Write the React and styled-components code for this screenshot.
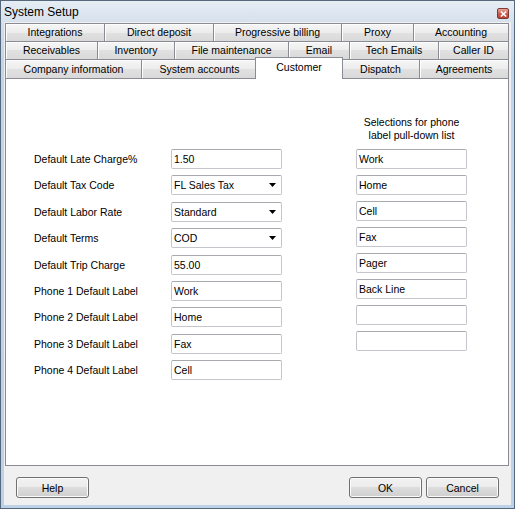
import React from "react";
import styled, { createGlobalStyle } from "styled-components";

const Global = createGlobalStyle`
  html, body { margin: 0; padding: 0; background: #c6d7ea; }
  * { box-sizing: border-box; }
  body { font-family: "Liberation Sans", Arial, sans-serif; font-size: 10.5px; color: #000; }
`;

const Window = styled.div`
  width: 515px;
  height: 509px;
  border: 1px solid #56687c;
  background: linear-gradient(#d9e4f0, #c2d5e9 60px, #bdd1e7);
  display: flex;
  flex-direction: column;
`;

const TitleBar = styled.div`
  height: 21px;
  flex: 0 0 21px;
  display: flex;
  align-items: center;
  justify-content: space-between;
  padding: 1px 5px 0 3px;
  background: linear-gradient(#e6edf5, #d6e1ec);
`;

const Title = styled.span`
  font-size: 12px;
  color: #000;
`;

const CloseButton = styled.span`
  width: 12px;
  height: 11px;
  margin-top: 3px;
  border: 1px solid #7c3a33;
  border-radius: 2px;
  background: linear-gradient(#e7a596, #cc5a4c 55%, #b8433a);
  display: flex;
  align-items: center;
  justify-content: center;
`;

const Client = styled.div`
  flex: 1;
  margin: 0 3px 3px 3px;
  background: #f0f0f0;
  padding: 1px 2px 0 1px;
  display: flex;
  flex-direction: column;
`;

const TabRow = styled.div`
  display: flex;
  height: ${(p) => p.$h}px;
  flex: 0 0 ${(p) => p.$h}px;
`;

const Tab = styled.div`
  flex: 0 0 auto;
  height: 100%;
  border: 1px solid #898c95;
  border-bottom: none;
  border-right: ${(p) => (p.$last ? "1px solid #898c95" : "none")};
  background: linear-gradient(#f6f6f6, #ececec 50%, #e1e1e1 50%, #d9d9d9);
  box-shadow: inset 1px 1px 0 #fdfdfd;
  display: flex;
  align-items: center;
  justify-content: center;
  white-space: nowrap;
  padding-bottom: 1px;
`;

const ActiveTab = styled.div`
  flex: 0 0 auto;
  position: relative;
  z-index: 1;
  margin: -2px -2px -1px -2px;
  height: calc(100% + 3px);
  border: 1px solid #898c95;
  border-bottom: none;
  background: #fff;
  display: flex;
  align-items: center;
  justify-content: center;
  padding-bottom: 3px;
  white-space: nowrap;
`;

const Panel = styled.div`
  height: 388px;
  flex: 0 0 388px;
  border: 1px solid #898c95;
  background: #fff;
  display: flex;
  align-items: flex-start;
  padding: 37px 0 0 28px;
`;

const Form = styled.div`
  margin-top: 33px;
  display: grid;
  grid-template-columns: 137px 111px;
  row-gap: 6.375px;
  align-items: center;
`;

const Label = styled.div`
  white-space: nowrap;
`;

const TextBox = styled.div`
  height: 20px;
  border: 1px solid #c4c6cb;
  border-top-color: #a7a9ae;
  border-radius: 2px;
  background: #fff;
  padding: 0 5px 0 2px;
  display: flex;
  align-items: center;
  justify-content: space-between;
  white-space: nowrap;
`;

const SideColumn = styled.div`
  margin-left: 74px;
  width: 111px;
  display: flex;
  flex-direction: column;
  gap: 6px;
`;

const SideHeading = styled.div`
  text-align: center;
  line-height: 13px;
  margin-bottom: 1px;
`;

const Footer = styled.div`
  display: flex;
  align-items: flex-start;
  padding: 11px 10px 0 11px;
  gap: 4px;
`;

const Button = styled.button`
  width: 73px;
  height: 21px;
  border: 1px solid #707070;
  border-radius: 3px;
  background: linear-gradient(#f2f2f2, #ebebeb 50%, #dddddd 50%, #cfcfcf);
  box-shadow: inset 0 0 0 1px #fbfbfb;
  font-family: "Liberation Sans", Arial, sans-serif;
  font-size: 10.5px;
  color: #000;
  padding: 0;
  margin-right: ${(p) => (p.$push ? "auto" : "0")};
`;

const Arrow = () => (
  <svg width="7" height="4" viewBox="0 0 7 4">
    <path d="M0 0 H7 L3.5 4 Z" fill="#000" />
  </svg>
);

const tabRows = [
  {
    h: 18,
    tabs: [
      ["Integrations", 99],
      ["Direct deposit", 109],
      ["Progressive billing", 128],
      ["Proxy", 72],
      ["Accounting", 96],
    ],
  },
  {
    h: 18,
    tabs: [
      ["Receivables", 92],
      ["Inventory", 77],
      ["File maintenance", 114],
      ["Email", 61],
      ["Tech Emails", 89],
      ["Caller ID", 71],
    ],
  },
  {
    h: 19,
    tabs: [
      ["Company information", 136],
      ["System accounts", 116],
      ["Customer", 84, true],
      ["Dispatch", 78],
      ["Agreements", 90],
    ],
  },
];

const fields = [
  ["Default Late Charge%", "1.50"],
  ["Default Tax Code", "FL Sales Tax", true],
  ["Default Labor Rate", "Standard", true],
  ["Default Terms", "COD", true],
  ["Default Trip Charge", "55.00"],
  ["Phone 1 Default Label", "Work"],
  ["Phone 2 Default Label", "Home"],
  ["Phone 3 Default Label", "Fax"],
  ["Phone 4 Default Label", "Cell"],
];

const selections = ["Work", "Home", "Cell", "Fax", "Pager", "Back Line", "", ""];

export default function App() {
  return (
    <>
      <Global />
      <Window>
        <TitleBar>
          <Title>System Setup</Title>
          <CloseButton>
            <svg width="7" height="6" viewBox="0 0 7 6">
              <path d="M0.8 0.5 L6.2 5.5 M6.2 0.5 L0.8 5.5" stroke="#fff" strokeWidth="1.6" />
            </svg>
          </CloseButton>
        </TitleBar>
        <Client>
          {tabRows.map((row, ri) => (
            <TabRow key={ri} $h={row.h}>
              {row.tabs.map(([name, w, active], i) =>
                active ? (
                  <ActiveTab key={name} style={{ width: w + 4 }}>
                    {name}
                  </ActiveTab>
                ) : (
                  <Tab key={name} style={{ width: w }} $last={i === row.tabs.length - 1}>
                    {name}
                  </Tab>
                )
              )}
            </TabRow>
          ))}
          <Panel>
            <Form>
              {fields.map(([label, value, combo]) => (
                <React.Fragment key={label}>
                  <Label>{label}</Label>
                  <TextBox>
                    <span>{value}</span>
                    {combo && <Arrow />}
                  </TextBox>
                </React.Fragment>
              ))}
            </Form>
            <SideColumn>
              <SideHeading>
                Selections for phone
                <br />
                label pull-down list
              </SideHeading>
              {selections.map((s, i) => (
                <TextBox key={i}>
                  <span>{s}</span>
                </TextBox>
              ))}
            </SideColumn>
          </Panel>
          <Footer>
            <Button $push>Help</Button>
            <Button>OK</Button>
            <Button>Cancel</Button>
          </Footer>
        </Client>
      </Window>
    </>
  );
}
